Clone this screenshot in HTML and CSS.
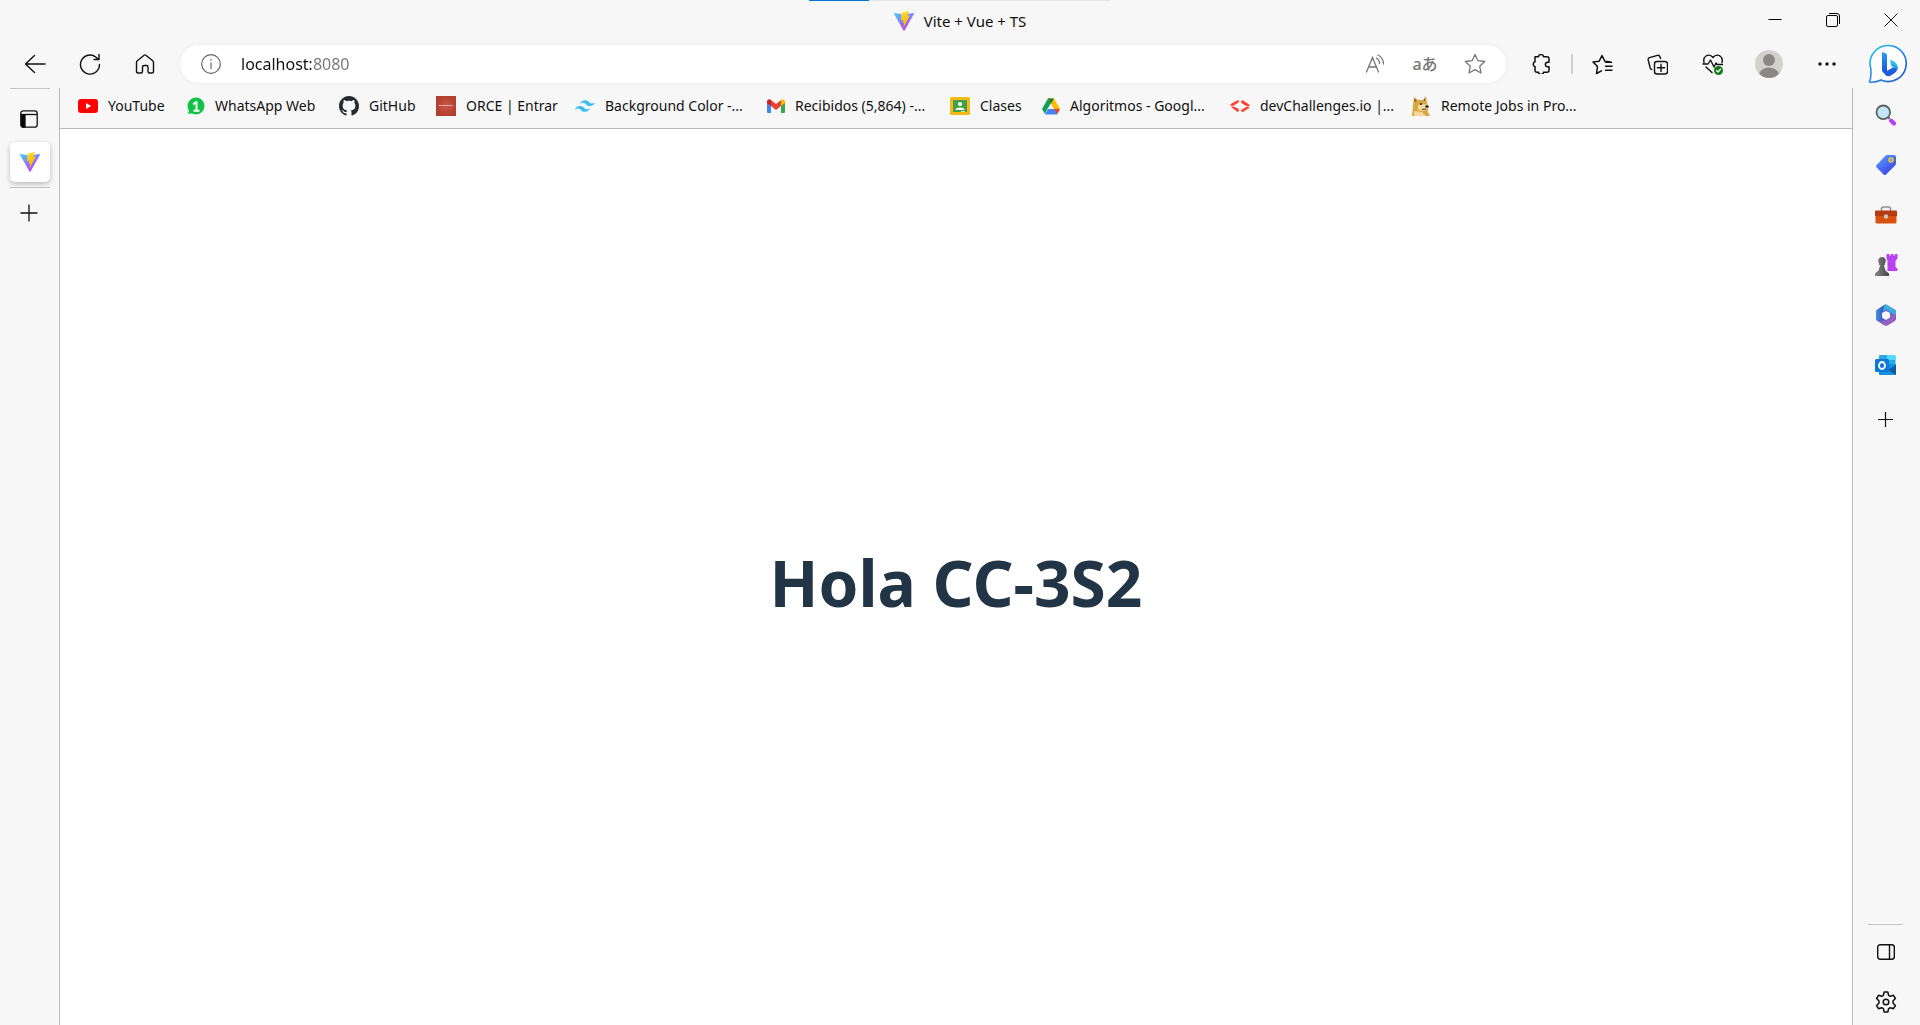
FILE: index.html
```html
<!DOCTYPE html>
<html lang="es">
<head>
<meta charset="utf-8">
<title>Vite + Vue + TS</title>
<meta name="viewport" content="width=device-width, initial-scale=1">
<link rel="stylesheet" href="styles.css">
</head>
<body>
<svg class="defs" width="0" height="0" aria-hidden="true">
  <defs>
    <linearGradient id="vite-a" x1="0" y1="0" x2=".6" y2="1"><stop offset="0" stop-color="#41d1ff"/><stop offset="1" stop-color="#bd34fe"/></linearGradient>
    <linearGradient id="vite-b" x1=".4" y1="0" x2=".6" y2="1"><stop offset="0" stop-color="#ffea50"/><stop offset=".2" stop-color="#ffd020"/><stop offset="1" stop-color="#ffa800"/></linearGradient>
    <symbol id="vite" viewBox="0 0 20 20">
      <path fill="url(#vite-a)" d="M19.9 2.9 10.5 19.6a.6.6 0 0 1-1 0L.1 2.9a.6.6 0 0 1 .6-.9l9.300 1.600L19.300 2a.6.6 0 0 1 .6.900z"/>
      <path fill="url(#vite-b)" d="M14.500.100 7.600 1.400a.3.3 0 0 0-.2.300L7 9a.3.3 0 0 0 .3.300l2-.4-.6 2.900c0 .2.1.3.3.300l1.200-.4-.9 4.500c-.1.3.300.400.4.200l5.900-11.500a.3.3 0 0 0-.3-.4l-2 .4 1.500-4.500a.3.3 0 0 0-.3-.3z"/>
    </symbol>
  </defs>
</svg>

<header class="chrome">
  <div class="titlebar">
    <div class="progress"><span class="progress-fill"></span></div>
    <div class="window-title">
      <svg width="20" height="20"><use href="#vite"/></svg>
      <span>Vite + Vue + TS</span>
    </div>
    <div class="window-controls">
      <button aria-label="Minimizar"><svg width="14" height="14" fill="none" stroke="#000"><path d="M.5 6.500h13"/></svg></button>
      <button aria-label="Restaurar"><svg width="14" height="14" fill="none" stroke="#000"><rect x=".5" y="2.500" width="11" height="11" rx="1.500"/><path d="M3 .500h8q2.500 0 2.500 2.500v8"/></svg></button>
      <button aria-label="Cerrar"><svg width="14" height="14" fill="none" stroke="#111"><path d="m.5.500 13 13m0-13-13 13"/></svg></button>
    </div>
  </div>

  <div class="toolbar">
    <nav class="nav-buttons" aria-label="Navegación">
      <button aria-label="Atrás"><svg width="22" height="22" fill="none" stroke="#111" stroke-width="1.400" stroke-linecap="round" stroke-linejoin="round"><path d="M21 11H1.500M10.500 2.500 1.500 11l9 8.500"/></svg></button>
      <button aria-label="Actualizar"><svg width="22" height="22" fill="none" stroke="#111" stroke-width="1.400" stroke-linecap="round" stroke-linejoin="round"><path d="M20.500 11.500A9.500 9.500 0 1 1 17 4.200l2.500 2M20 1.500v5h-5"/></svg></button>
      <button aria-label="Inicio"><svg width="20" height="20" fill="none" stroke="#111" stroke-width="1.400" stroke-linejoin="round"><path d="M1.500 8.500q0-1 .8-1.700l6.800-5.600q.9-.7 1.800 0l6.800 5.600q.8.7.8 1.700v9q0 1.500-1.500 1.500h-2.500q-1.500 0-1.500-1.500V13q0-1.500-1.500-1.500h-2Q7.500 11.500 7.500 13v4.500Q7.500 19 6 19H3q-1.500 0-1.500-1.500z"/></svg></button>
    </nav>

    <form class="address">
      <button type="button" aria-label="Ver información del sitio"><svg width="20" height="20" fill="none" stroke="#666" stroke-width="1.200"><circle cx="10" cy="10" r="9.300"/><path d="M10 8.500V15M10 5v1.600"/></svg></button>
      <input type="text" aria-label="Dirección" value="localhost:8080" spellcheck="false">
      <button type="button" aria-label="Leer en voz alta"><svg width="20" height="20" fill="none" stroke="#767676" stroke-width="1.300" stroke-linecap="round"><path d="M1.500 18 7.500 3.500l6 14.500M3.700 13h7.600M11.500 4q3 2 3 5.500M13 1q5.500 3 5.500 9"/></svg></button>
      <button type="button" class="translate" aria-label="Traducir">aあ</button>
      <button type="button" aria-label="Agregar a favoritos"><svg width="22" height="22" fill="none" stroke="#767676" stroke-width="1.300" stroke-linejoin="round"><path d="m11 1.500 2.900 6.200 6.800.8-5 4.700 1.300 6.800-6-3.400L5 20l1.300-6.800-5-4.700 6.800-.8z"/></svg></button>
    </form>

    <div class="tools">
      <button class="extensions" aria-label="Extensiones"><svg width="20" height="20" fill="none" stroke="#111" stroke-width="1.500" stroke-linejoin="round"><path d="M4 2.800h3.500a2.500 2.200 0 0 1 5 0H16q2 0 2 2v3.400h-1.300a2.300 2.300 0 0 0 0 4.600H18v3.400q0 2-2 2h-3.500a2.500 2.200 0 0 1-5 0H6q-2 0-2-2v-3.600a2.500 2.500 0 0 1 0-4.800V2.800z"/></svg></button>
      <span class="divider"></span>
      <button aria-label="Favoritos"><svg width="21" height="21" fill="none" stroke="#111" stroke-width="1.500" stroke-linecap="round" stroke-linejoin="round"><path d="M18.500 8 12.800 7.200 10 1.500 7.200 7.200 1 8l4.500 4.500-1 7 5-2.700M13.500 8.200h6M13.500 12.200h6.500M13.500 16.200h6.500"/></svg></button>
      <button aria-label="Colecciones"><svg width="21" height="21" fill="none" stroke="#111" stroke-width="1.400" stroke-linecap="round"><rect x="7.500" y="7.500" width="13" height="12.500" rx="2.500"/><path d="M14 10.200v7.200M10.400 13.800h7.200M13.500 4.500l-.7-2Q12.200.8 10.500 1.300L2.500 3.700Q.8 4.200 1.200 6l2 8q.4 1.300 1.500 1.500"/></svg></button>
      <button aria-label="Rendimiento"><svg width="22" height="21" fill="none" stroke="#111" stroke-width="1.400" stroke-linecap="round" stroke-linejoin="round"><path d="M2 8.500Q1 4 4 2q4-2.300 7 1.500Q14 -.300 18 2q3 2 2 6.500M1 10h5l2.500-4 3.500 7 2-4 1 1.500h5.500M4 13l6 5.500"/><circle cx="16.500" cy="16.500" r="4.500" fill="#13791b" stroke="none"/><path stroke="#fff" d="m14.500 16.500 1.500 1.500 2.500-2.800"/></svg></button>
      <button class="wide" aria-label="Perfil"><svg width="28" height="28" viewBox="0 0 28 28"><circle cx="14" cy="14" r="14" fill="#d2d1ce"/><circle cx="14" cy="10" r="6" fill="#8a8886"/><path fill="#8a8886" d="M4 23.500q3-6 10-6t10 6Q20 28 14 28T4 23.500z"/></svg></button>
      <button class="wide" aria-label="Configuración y más"><svg width="18" height="4" fill="#111"><circle cx="2" cy="2" r="1.700"/><circle cx="9" cy="2" r="1.700"/><circle cx="16" cy="2" r="1.700"/></svg></button>
      <button class="bing" aria-label="Bing"><svg width="40" height="40" viewBox="0 0 40 40">
        <defs><linearGradient id="bing-ring" x1="0" y1="0" x2="1" y2="1"><stop offset="0" stop-color="#1cc8ee"/><stop offset=".5" stop-color="#2387e8"/><stop offset="1" stop-color="#174ac0"/></linearGradient>
        <linearGradient id="bing-a" x1="0" y1="0" x2="0" y2="1"><stop offset="0" stop-color="#2a9df4"/><stop offset="1" stop-color="#174bd8"/></linearGradient>
        <linearGradient id="bing-b" x1="0" y1="0" x2="0" y2="1"><stop offset="0" stop-color="#30dce0"/><stop offset="1" stop-color="#1b8dea"/></linearGradient></defs>
        <path fill="#fff" stroke="url(#bing-ring)" stroke-width="1.600" stroke-linejoin="round" d="M20.500 1.500a18 18 0 1 1-7.500 34.500Q7 38.800 1.500 38q2-5 1.300-13.500A18 18 0 0 1 20.500 1.500z"/>
        <path fill="url(#bing-a)" d="m14 8 3.500 1.300q1.500.6 1.500 2v15l-1 4-2.500-1.500q-1.500-1-1.500-3z"/>
        <path fill="url(#bing-b)" d="M22 15.500q7.500 2.500 8 8.500-.2 1.500-1 2.500-1-3-4.500-3.500-1-.5-1.500-2z"/>
        <path fill="#1f5de0" d="m16 28.500 9-5q3.500 0 4 2.500-.5 1.700-2 2.700l-4 2.800q-3 1.500-5.500-.2z"/>
      </svg></button>
    </div>
  </div>
</header>

<div class="workspace">
  <aside class="tabs" aria-label="Pestañas verticales">
    <hr>
    <button class="tab-toggle" aria-label="Panel de pestañas"><svg width="18" height="18" fill="none" stroke="#111" stroke-width="1.300"><rect x=".8" y=".8" width="16.400" height="16.400" rx="2.500"/><path d="M1 4.500h16"/><path fill="#000" d="M1.500 5H5v12H3q-1.500 0-1.500-1.500z"/></svg></button>
    <button class="tab" aria-label="Vite + Vue + TS"><svg width="20" height="20"><use href="#vite"/></svg></button>
    <hr>
    <button class="new-tab" aria-label="Nueva pestaña"><svg width="18" height="18" stroke="#111" stroke-width="1.300"><path d="M9 .500v17M.500 9h17"/></svg></button>
  </aside>

  <div class="viewport">
    <nav class="bookmarks" aria-label="Favoritos">
      <a href="#"><svg width="20" height="20"><rect y="3" width="20" height="14" rx="3" fill="red"/><path fill="#fff" d="m8 7 5.200 3L8 13z"/></svg><span>YouTube</span></a>
      <a href="#"><svg width="18" height="18"><circle cx="9" cy="9" r="8.500" fill="#10c245"/><path fill="#10c245" d="m1 17 1.500-6L7 16z"/><path fill="none" stroke="#fff" stroke-width="2" d="M6 7q2.500-.5 3.500-2.500v9.500M6.500 13.800h6"/></svg><span>WhatsApp Web</span></a>
      <a href="#"><svg width="20" height="20" viewBox="0 0 16 16"><path fill="#24292f" d="M8 0C3.580 0 0 3.580 0 8c0 3.540 2.290 6.530 5.470 7.590.4.070.55-.17.55-.38 0-.19-.01-.82-.01-1.490-2.010.37-2.530-.49-2.690-.94-.09-.23-.48-.94-.82-1.130-.28-.15-.68-.52-.01-.53.63-.01 1.080.58 1.230.82.72 1.210 1.870.87 2.330.66.070-.52.280-.87.510-1.070-1.780-.2-3.640-.89-3.640-3.950 0-.87.310-1.590.820-2.150-.08-.2-.36-1.020.080-2.120 0 0 .67-.21 2.200.82.64-.18 1.320-.27 2-.27s1.360.09 2 .27c1.530-1.040 2.200-.82 2.200-.82.44 1.100.16 1.920.080 2.120.51.560.82 1.270.82 2.150 0 3.070-1.870 3.750-3.650 3.950.29.250.54.730.54 1.480 0 1.070-.01 1.930-.01 2.200 0 .21.150.46.550.38A8.010 8.010 0 0 0 16 8c0-4.420-3.580-8-8-8z"/></svg><span>GitHub</span></a>
      <a href="#"><svg width="20" height="20"><defs><radialGradient id="orce"><stop stop-color="#cb5544"/><stop offset="1" stop-color="#b2402f"/></radialGradient></defs><path fill="url(#orce)" d="M0 0h20v20H0z"/><path stroke="#edc1b8" stroke-dasharray="2 .5" d="M3 9.500h14"/></svg><span>ORCE | Entrar</span></a>
      <a href="#"><svg width="20" height="20" viewBox="0 0 24 24"><path fill="#38bdf8" d="M12 5Q7.200 5 6 9.800 7.800 7.400 10.200 8c3 .8 3.500 4 7.800 4q4.800 0 6-4.800-1.800 2.400-4.200 1.800C16.800 8.200 16.300 5 12 5zM6 12q-4.800 0-6 4.800 1.800-2.400 4.200-1.800c3 .8 3.500 4 7.800 4q4.800 0 6-4.800-1.800 2.400-4.200 1.800c-3-.8-3.500-4-7.800-4z"/></svg><span>Background Color -...</span></a>
      <a href="#"><svg width="18" height="14"><path fill="#4285f4" d="M0 2h4v12H1.300Q0 14 0 12.700z"/><path fill="#34a853" d="M14 2h4v10.700q0 1.300-1.300 1.300H14z"/><path fill="#fbbc04" d="M14 1q2.500-2 4 .8V4l-4 3z"/><path fill="#c5221f" d="M0 1.800Q1.500-1 4 1v6L0 4z"/><path fill="#ea4335" d="m4 1 5 4 5-4v6l-5 4-5-4z"/></svg><span>Recibidos (5,864) -...</span></a>
      <a href="#"><svg width="20" height="18"><rect width="20" height="18" rx="1.500" fill="#f5ba15"/><path fill="#43a047" d="M3 3h14v12H3z"/><circle cx="10" cy="7" r="2" fill="#fff"/><path fill="#fff" d="M5.500 13q0-2.500 4.500-2.500t4.500 2.500z"/><path fill="#d8e8d0" d="M11 14h4v1h-4z"/></svg><span>Clases</span></a>
      <a href="#"><svg width="18" height="17"><path fill="#0f9d58" d="M6 .500h6L5 11.500 3 16l-3-5z"/><path fill="#ffba00" d="M6 .500h6L18 11h-6z"/><path fill="#188038" d="M6 .500h6L9 5.700z"/><path fill="#4285f4" d="M6 11h12l-3 5.500H3z"/><path fill="#ea4335" d="M12 11h6l-3 5z"/></svg><span>Algoritmos - Googl...</span></a>
      <a href="#"><svg width="20" height="14" fill="#ff4532"><path d="M7 1.500q1.500-.8 2 .3.300 1-.6 1.700L3 7 .3 6.600Q0 5.500 1.200 4.800zM1 7.800l3-.3 4.200 2.300q1.200.9.600 2.200-.8 1.300-2 .6zM11.200 2.200q.6-1.300 2-.7l5.600 3.700q1.400 1 .7 1.900l-2.800.1-5-3Q10.700 3.400 11.200 2.200zM16.500 7.800l2.800.2q.2.800-.8 1.500l-5.300 3.300q-1.400.6-2-.5-.4-1.100.7-1.900z"/></svg><span>devChallenges.io |...</span></a>
      <a href="#"><svg width="20" height="20"><path fill="#d9a743" d="M1 20 2 9 3 1l4 3h5l3-4 1 7 1.500 5-1 3 2.500 5z"/><path fill="#f1d79a" d="m7 9 8-1 2 4-4 3-6-1zM3 15l8 1 4 4H3z"/><path fill="#7d5923" d="m3.500 2 2 3-2 1zM14 2v3l-1.500-1z"/><circle cx="10" cy="8" r="1" fill="#222"/><ellipse cx="16" cy="10.500" rx="1.700" ry="1.300" fill="#222"/><path stroke="#544027" fill="none" d="m11 13.500 4-.5"/></svg><span>Remote Jobs in Pro...</span></a>
    </nav>
    <main class="page"><h1>Hola CC-3S2</h1></main>
  </div>

  <aside class="sidebar" aria-label="Barra lateral">
    <div class="apps">
      <button aria-label="Buscar"><svg width="22" height="22"><path stroke="#b83cf8" stroke-width="4" stroke-linecap="round" d="m16 16.500 3 3"/><path stroke="#555" stroke-width="2" d="m12 12 2.500 2.500"/><circle cx="8.300" cy="8.300" r="6.800" fill="#c2e5f8" stroke="#5d6060" stroke-width="1.800"/></svg></button>
      <button aria-label="Compras"><svg width="22" height="22"><defs><linearGradient id="tag" x1="0" y1="0" x2=".7" y2="1"><stop stop-color="#58a6ff"/><stop offset="1" stop-color="#3e3ee8"/></linearGradient></defs><path fill="url(#tag)" d="M12 1h7q2 0 2 2v6q0 1.500-1 2.500l-9 9q-1.200 1-2.400 0l-7-7q-1.200-1.200 0-2.500l8.500-9Q11 1 12 1z"/><circle cx="16" cy="6" r="2" fill="#58a6ff" stroke="#f7ca25" stroke-width="1.500"/></svg></button>
      <button aria-label="Herramientas"><svg width="22" height="20"><path fill="none" stroke="#909294" stroke-width="1.600" d="M6.500 6V4q0-2 2-2h5q2 0 2 2v2"/><rect x=".5" y="9" width="21" height="9.500" rx="1.500" fill="#d9500f"/><path fill="#b83a13" d="M0 6.500Q0 5.500 1 5.500h20q1 0 1 1V11H0z"/><rect x="9" y="9.500" width="4" height="4" rx="1" fill="#c5c8cb"/></svg></button>
      <button aria-label="Juegos"><svg width="24" height="24"><defs><linearGradient id="pawn"><stop stop-color="#858585"/><stop offset="1" stop-color="#484848"/></linearGradient></defs><path fill="#b842f0" d="M13.500 1h2v1.500H17V1h2.500v1.500H21V1h2.500v4.500L21.500 8v6l2 1.500V18h-10V8l-1-2.500V1z"/><path fill="url(#pawn)" d="M8 4a4 4 0 0 1 3 6.500V12H9.800l1.700 5.500 3.500 3V23H1v-2.500l3.500-3L6.200 12H5v-1.500A4 4 0 0 1 8 4z"/></svg></button>
      <button aria-label="Microsoft 365"><svg width="22" height="22"><defs><linearGradient id="m365" x1="0" x2="1"><stop stop-color="#4d8ee9"/><stop offset="1" stop-color="#234aa8"/></linearGradient></defs><path fill="#5c67d4" d="M11 .500 20 5.700q1 .6 1 2v7q0 1.200-1 2l-7 4.300q-2 1-4 0l-7-4.300q-1-.7-1-2v-7q0-1.300 1-2L9 1.200q1-.7 2-.7z"/><path fill="url(#m365)" d="M11 .500 9 6 7.500 8v8q-3 1.500-6-.5l-.5-1V7.500l1-1.800L9 1.200q1-.7 2-.7z"/><path fill="#39aee0" d="m11 .500 9 5.200q1 .6 1 2V12l-6-4-4-2.500-3 2 1-6z"/><path fill="#9460be" d="m21 10-1 6.700-7 4.300q-2 1-4 0l-4-2.500 3-2 3 .5 4-2.500V11z"/><path fill="#f7f7f7" d="m11 7 4 2v4.500L11 16l-4-2.500V9z"/></svg></button>
      <button aria-label="Outlook"><svg width="22" height="22"><path fill="#28a8ea" d="M5 1h14q1.500 0 1.500 1.500V12H4V2q0-1 1-1z"/><path fill="#50d9ff" d="M12 1h7q1.500 0 1.500 1.500V6H12z"/><path fill="#1490df" d="M4 10h17v9.500q0 1.500-1.500 1.500H5q-1 0-1-1z"/><path fill="#0a5c9f" d="m21 11-8 5 8 5z"/><rect y="5" width="14" height="13" rx="1.500" fill="#0f78d4"/><ellipse cx="7" cy="11.500" rx="3" ry="3.500" fill="none" stroke="#fff" stroke-width="1.800"/></svg></button>
      <button class="add" aria-label="Personalizar"><svg width="15" height="15" stroke="#111" stroke-width="1.200"><path d="M7.500 0v15M0 7.500h15"/></svg></button>
    </div>
    <div class="settings">
      <hr>
      <button aria-label="Ocultar barra lateral"><svg width="18" height="16" fill="none" stroke="#111" stroke-width="1.400"><rect x=".7" y=".7" width="16.600" height="14.600" rx="2.500"/><path d="M12.500 1v14"/></svg></button>
      <button aria-label="Configuración"><svg width="22" height="22" fill="none" stroke="#111" stroke-width="1.500" stroke-linejoin="round"><path d="M9.200 1h3.600l.8 3.300 1.700 1 3.200-1 1.900 3.200L18 10v2l2.400 2.500-1.900 3.200-3.200-1-1.700 1-.8 3.300H9.200l-.8-3.300-1.700-1-3.200 1-1.900-3.200L4 12v-2L1.600 7.500l1.900-3.200 3.200 1 1.700-1z"/><circle cx="11" cy="11" r="2.800"/></svg></button>
    </div>
  </aside>
</div>
</body>
</html>
```
FILE: styles.css
```css
* { box-sizing: border-box; }

body {
  margin: 0;
  min-height: 100vh;
  display: flex;
  flex-direction: column;
  background: #f7f7f7;
  color: #111;
  font: 14px/20px "Noto Sans", sans-serif;
}

.defs { position: absolute; }

button {
  display: flex;
  align-items: center;
  justify-content: center;
  padding: 0;
  border: 0;
  background: none;
  color: inherit;
  font: inherit;
}

svg { display: block; flex: none; }

hr {
  width: 100%;
  height: 1px;
  margin: 0;
  border: 0;
  background: #c4c4c4;
}

/* Title bar */
.titlebar {
  display: grid;
  grid-template-columns: 1fr auto 1fr;
  height: 42px;
  position: relative;
}

.progress {
  position: absolute;
  top: 0;
  left: 50%;
  width: 302px;
  height: 1px;
  margin-left: -151px;
  background: #e4e4e4;
}

.progress-fill {
  display: block;
  width: 20%;
  height: 100%;
  background: #0078d4;
}

.window-title {
  grid-column: 2;
  display: flex;
  align-items: center;
  gap: 10px;
  padding-bottom: 1px;
  font-size: 15px;
}

.window-controls {
  display: flex;
  justify-content: flex-end;
}

.window-controls button { width: 58px; height: 40px; }

/* Toolbar */
.toolbar {
  display: flex;
  align-items: center;
  height: 46px;
  padding: 0 0 2px 7px;
}

.nav-buttons, .tools { display: flex; align-items: center; }
.nav-buttons button, .tools button { width: 55px; height: 40px; }
.tools .extensions { width: 56px; }
.tools .wide { width: 58px; }
.tools .bing { width: 64px; }

.divider {
  width: 2px;
  height: 20px;
  margin: 0 2px;
  background: #cfcfcf;
}

.address {
  flex: 1;
  display: flex;
  align-items: center;
  height: 38px;
  margin: 0 7px 0 8px;
  padding: 0 6px;
  border-radius: 19px;
  background: #fff;
  box-shadow: 0 0 5px #0000000d;
}

.address button { width: 50px; height: 38px; }

.address input {
  flex: 1;
  min-width: 0;
  height: 24px;
  margin-left: 5px;
  padding: 0;
  border: 0;
  outline: 0;
  color: #111;
  font: 16px/24px "Noto Sans", sans-serif;
  background: linear-gradient(90deg, #111 70px, #767676 70px);
  background-clip: text;
  -webkit-text-fill-color: transparent;
}

.address .translate {
  color: #767676;
  font: 500 16px/20px "Noto Sans", "Noto Sans CJK JP", sans-serif;
}

/* Tabs, page and sidebar */
.workspace { flex: 1; display: flex; }

.tabs {
  width: 60px;
  display: flex;
  flex-direction: column;
  align-items: center;
  padding: 0 10px;
  border-right: 1px solid #bababa;
}

.tabs hr, .tabs .tab { width: 40px; }
.tab-toggle { width: 40px; height: 53px; padding: 7px 2px 0 0; }

.tab {
  height: 40px;
  margin-bottom: 5px;
  border-radius: 5px;
  background: #fff;
  box-shadow: 0 2px 5px #00000040;
}

.new-tab { width: 40px; height: 50px; padding-right: 2px; }

.viewport {
  flex: 1;
  min-width: 0;
  display: flex;
  flex-direction: column;
}

.bookmarks {
  display: grid;
  grid-template-columns: 109px 152px 97px 139px 192px 183px 92px 188px 181px 180px;
  align-items: center;
  height: 41px;
  padding: 0 18px 4px;
  border-bottom: 1px solid #bababa;
}

.bookmarks a {
  display: flex;
  align-items: center;
  gap: 10px;
  color: #111;
  text-decoration: none;
  white-space: nowrap;
}

.page {
  flex: 1;
  display: flex;
  align-items: center;
  justify-content: center;
  padding-top: 12px;
  background: #fff;
}

h1 {
  margin: 0;
  color: #213547;
  font-size: 64px;
  line-height: 72px;
}

.sidebar {
  width: 68px;
  display: flex;
  flex-direction: column;
  justify-content: space-between;
  padding-right: 2px;
  border-left: 1px solid #bababa;
}

.apps, .settings {
  display: flex;
  flex-direction: column;
  align-items: center;
}

.apps { padding-top: 2px; }
.apps button, .settings button { width: 50px; height: 50px; }
.apps .add { height: 58px; }
.settings hr { width: 35px; }
.settings button { padding-top: 4px; }
```
